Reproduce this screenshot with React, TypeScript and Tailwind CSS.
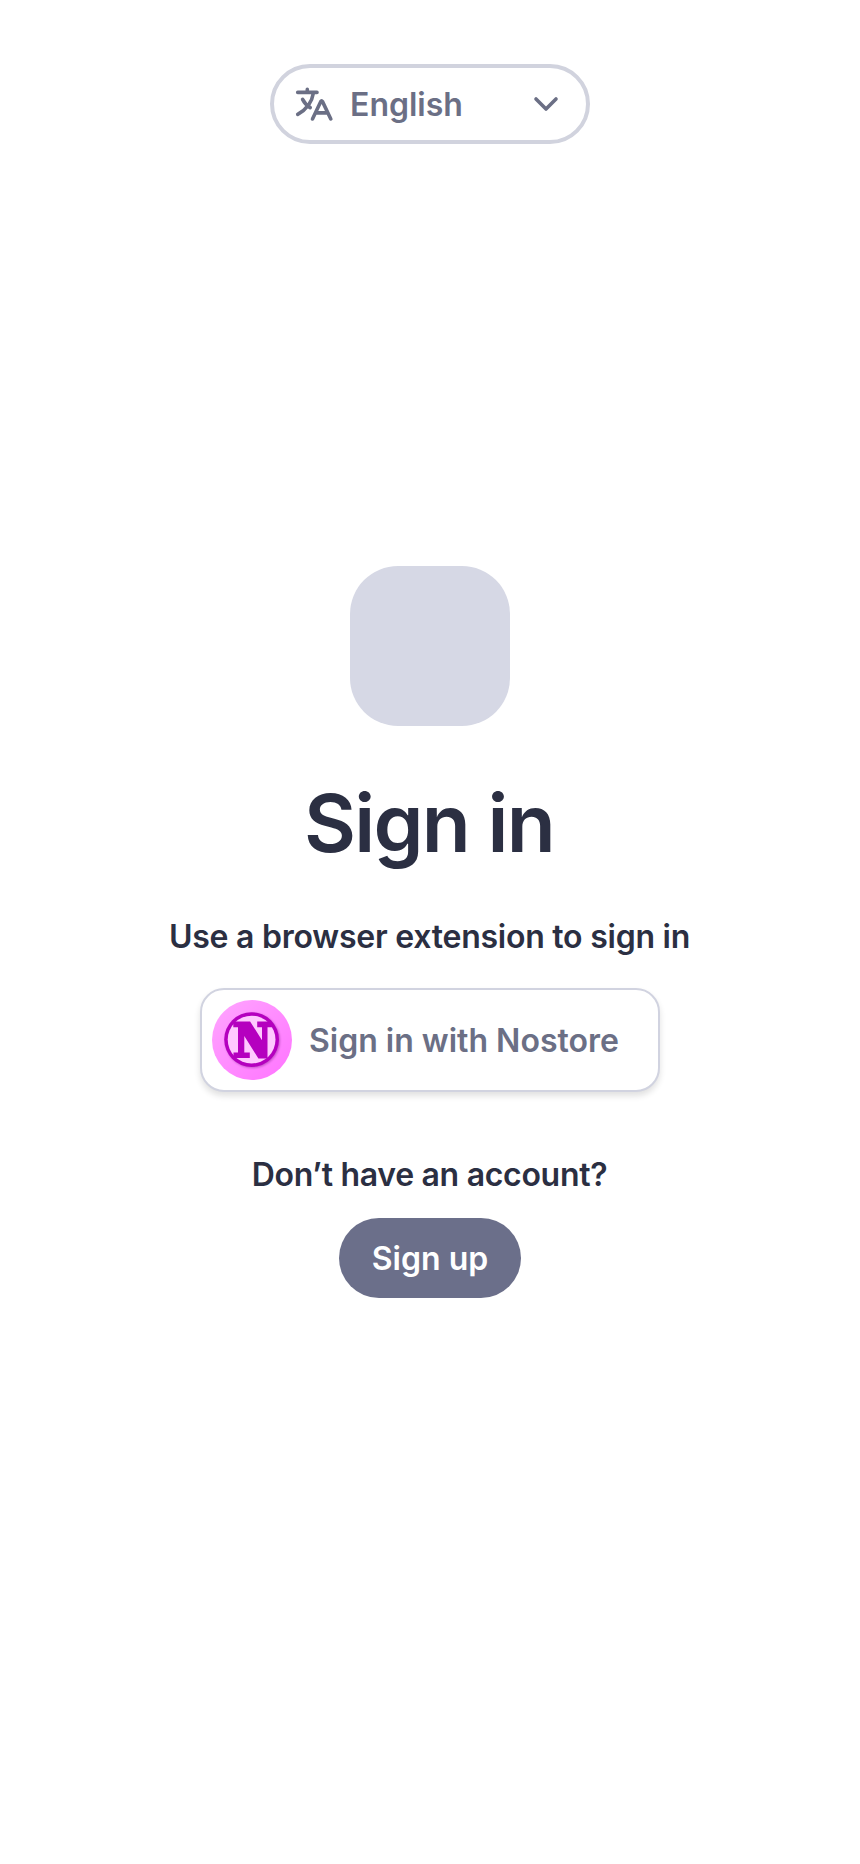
export default function App() {
  return (
    <main className="flex h-[1864px] w-full flex-col items-center overflow-hidden bg-white pt-16 font-['Inter',sans-serif] text-[32px] leading-[48px] font-semibold text-[#2b2f42]">
      <button className="flex h-20 w-80 items-center rounded-full border-4 border-[#d1d3de] pr-6 pl-5 text-[#6b6f85]">
        <svg className="size-10" viewBox="0 0 40 40" fill="none" stroke="currentColor" strokeWidth="3.6" strokeLinecap="round" strokeLinejoin="round">
          <path d="M3.7 8.4H23M13.3 8.3V5.4M19.4 9C18 18 12.5 25.5 3.7 30.3M8.6 15.4C10.3 18.8 13 21.8 16.2 23.6" />
          <path d="M18.5 35L26.8 17.4Q27.6 16.1 28.4 17.4L36.8 35M22 28.9H33.2" />
        </svg>
        <span className="ml-4 flex-1 pt-0.5 text-left">English</span>
        <svg className="size-8" viewBox="0 0 32 32" fill="none" stroke="currentColor" strokeWidth="3.6" strokeLinecap="round" strokeLinejoin="round">
          <path d="M6 11L16 21L26 11" />
        </svg>
      </button>

      <div className="mt-[422px] size-40 rounded-[48px] bg-[#d6d8e5]" />
      <h1 className="mt-[49px] pr-0.5 text-[80px] leading-[96px] tracking-[-0.021em]">Sign in</h1>
      <p className="mt-[42px] pr-px tracking-[-0.24px]">Use a browser extension to sign in</p>

      <button className="mt-[27px] flex h-[104px] w-[460px] items-center rounded-3xl border-2 border-[#d1d3e0] bg-white pl-2.5 text-[#6b6f85] shadow-[0_4px_6px_rgba(0,0,0,0.12)]">
        <svg className="size-20" viewBox="0 0 80 80">
          <defs>
            <linearGradient id="disc" x1="0" y1="0" x2="1" y2="1">
              <stop offset="0" stopColor="#ffa6ff" />
              <stop offset="1" stopColor="#ff73ff" />
            </linearGradient>
          </defs>
          <circle cx="40" cy="40" r="40" fill="url(#disc)" />
          <circle className="drop-shadow-[1px_1px_1px_rgba(90,0,100,0.35)]" cx="39.6" cy="39.6" r="27.4" fill="#b500bf" />
          <circle cx="39.6" cy="39.6" r="23.9" fill="#ffc9ff" />
          <path fill="#b500bf" d="M21.3 21.4H38.1L50 40.3V27.3H45.2V21.4H60V27.3H55.5V58.5H46.4L32.3 36V52.6H37.8V57.9H21.5V52.6H26V27.3H21.3Z" />
        </svg>
        <span className="ml-[17px] pt-0.5">Sign in with Nostore</span>
      </button>

      <p className="mt-[59px] pr-px tracking-[-0.3px]">Don’t have an account?</p>
      <button className="mt-[19px] h-20 rounded-full bg-[#6b6f8a] px-[33px] pt-0.5 text-white">Sign up</button>
    </main>
  );
}
